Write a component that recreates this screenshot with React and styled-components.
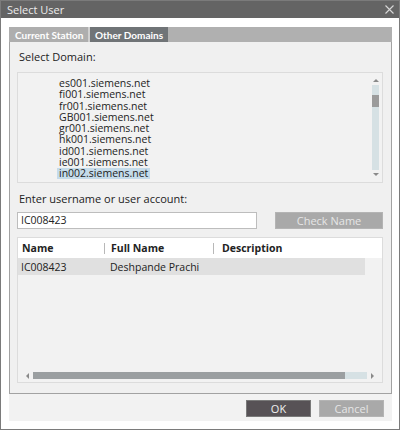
import React from "react";
import styled, { createGlobalStyle } from "styled-components";

const Global = createGlobalStyle`
  html, body { margin: 0; padding: 0; background: #ffffff; }
  body { font-family: "Open Sans", "Noto Sans", sans-serif; font-size: 11px; color: #222; }
  * { box-sizing: border-box; }
`;

const Window = styled.div`
  width: 400px;
  height: 430px;
  border: 1px solid #7b7b7b;
  background: #ffffff;
  display: flex;
  flex-direction: column;
`;

const TitleBar = styled.div`
  height: 17px;
  flex: none;
  background: #646464;
  color: #ececec;
  display: flex;
  align-items: center;
  justify-content: space-between;
  padding: 0 5px 1px 6px;
  font-size: 11px;
`;

const Body = styled.div`
  flex: 1;
  display: flex;
  flex-direction: column;
  padding: 9px 7px 8px 8px;
`;

const TabStrip = styled.div`
  height: 15px;
  flex: none;
  background: #b0b0b0;
  display: flex;
`;

const Tab = styled.div`
  height: 100%;
  width: ${(p) => p.$w}px;
  flex: none;
  display: flex;
  align-items: center;
  padding-left: ${(p) => p.$pl}px;
  font-family: Lato, "Open Sans", sans-serif;
  font-weight: 700;
  font-size: 10px;
  white-space: nowrap;
  color: #ffffff;
  background: ${(p) => (p.$active ? "#707477" : "#aeaeae")};
  border-right: ${(p) => (p.$sep ? "2px solid #d0d0d0" : "none")};
`;

const Panel = styled.div`
  height: 352px;
  flex: none;
  background: #f0f0f0;
  border: 1px solid #a2a2a2;
  border-top: none;
  display: flex;
  flex-direction: column;
  padding: 8px 8px 0 7px;
`;

const Label = styled.div`
  line-height: 14px;
  height: 14px;
  padding-left: 2px;
  margin-bottom: ${(p) => p.$mb}px;
  margin-top: ${(p) => p.$mt || 0}px;
`;

const ListBox = styled.div`
  height: 111px;
  border: 1px solid #dcdcdc;
  background: #f2f2f2;
  position: relative;
  padding: 2px 0 0 39px;
`;

const ItemRow = styled.div`
  height: 11.25px;
`;

const Item = styled.div`
  height: 11.25px;
  line-height: 11.25px;
  padding: 0 2px;
  display: inline-block;
  font-size: 10.5px;
  background: ${(p) => (p.$sel ? "#c4dbea" : "transparent")};
  color: #1d1d1d;
`;

const VScroll = styled.div`
  position: absolute;
  right: 3px;
  top: 3px;
  bottom: 3px;
  width: 7px;
  display: flex;
  flex-direction: column;
  align-items: center;
`;

const Arrow = styled.div`
  width: 0;
  height: 0;
  border-left: 3px solid transparent;
  border-right: 3px solid transparent;
  ${(p) => (p.$down ? "border-top: 3px solid #8a8a8a;" : "border-bottom: 3px solid #8a8a8a;")}
  margin: 3px 0;
  flex: none;
`;

const VTrack = styled.div`
  flex: 1;
  width: 7px;
  background: #d6e1e4;
  padding-top: 10px;
`;

const VThumb = styled.div`
  width: 7px;
  height: 12px;
  background: #9b9b9b;
`;

const InputRow = styled.div`
  height: 17px;
  display: flex;
  justify-content: space-between;
  margin-bottom: 8px;
`;

const TextInput = styled.div`
  width: 240px;
  height: 17px;
  background: #ffffff;
  border: 1px solid #bdbdbd;
  line-height: 15px;
  padding-left: 3px;
  font-size: 10.5px;
  color: #222;
`;

const Button = styled.div`
  width: ${(p) => p.$w}px;
  height: ${(p) => p.$h}px;
  background: ${(p) => (p.$dark ? "#575256" : "#a9a9a9")};
  border: 1px solid ${(p) => (p.$dark ? "#7a7a7a" : "#b4b4b4")};
  color: ${(p) => (p.$dark ? "#f0f0f0" : "#e6e6e6")};
  display: flex;
  align-items: center;
  justify-content: center;
  font-size: 11px;
`;

const Grid = styled.div`
  height: 146px;
  border: 1px solid #dcdcdc;
  background: #f2f2f2;
  position: relative;
  display: flex;
  flex-direction: column;
`;

const GridHeader = styled.div`
  height: 20px;
  background: #ffffff;
  display: flex;
  align-items: center;
  font-weight: 700;
  font-size: 10.5px;
  flex: none;
`;

const HeadCell = styled.div`
  width: ${(p) => p.$w}px;
  padding-left: ${(p) => p.$pl}px;
  border-right: ${(p) => (p.$sep ? "1px solid #b8b8b8" : "none")};
  height: 11px;
  line-height: 11px;
  display: flex;
  align-items: center;
`;

const GridRow = styled.div`
  height: 17px;
  width: 347px;
  background: #e0e0e0;
  display: flex;
  align-items: center;
  font-size: 10.5px;
`;

const Cell = styled.div`
  width: ${(p) => p.$w}px;
  padding-left: ${(p) => p.$pl}px;
`;

const HScroll = styled.div`
  position: absolute;
  left: 4px;
  right: 4px;
  bottom: 3px;
  height: 7px;
  display: flex;
  align-items: center;
`;

const HArrow = styled.div`
  width: 0;
  height: 0;
  border-top: 3px solid transparent;
  border-bottom: 3px solid transparent;
  ${(p) => (p.$right ? "border-left: 3px solid #8a8a8a;" : "border-right: 3px solid #8a8a8a;")}
  margin: 0 4px;
  flex: none;
`;

const HTrack = styled.div`
  flex: 1;
  height: 7px;
  background: #d6e1e4;
  display: flex;
`;

const HThumb = styled.div`
  width: 312px;
  height: 7px;
  background: #9b9fa1;
`;

const Footer = styled.div`
  height: 27px;
  flex: none;
  background: #f2f2f2;
  display: flex;
  justify-content: flex-end;
  align-items: center;
  gap: 8px;
  padding: 1px 8px 0 0;
`;

const CloseIcon = () => (
  <svg width="9" height="9" viewBox="0 0 9 9">
    <path d="M0.5 0.5 L8.5 8.5 M8.5 0.5 L0.5 8.5" stroke="#d8d8d8" strokeWidth="1.1" />
  </svg>
);

const domains = [
  "es001.siemens.net",
  "fi001.siemens.net",
  "fr001.siemens.net",
  "GB001.siemens.net",
  "gr001.siemens.net",
  "hk001.siemens.net",
  "id001.siemens.net",
  "ie001.siemens.net",
  "in002.siemens.net",
];

export default function App() {
  return (
    <>
      <Global />
      <Window>
        <TitleBar>
          <span>Select User</span>
          <CloseIcon />
        </TitleBar>
        <Body>
          <TabStrip>
            <Tab $w={81} $pl={6} $sep>Current Station</Tab>
            <Tab $w={78} $pl={5} $active>Other Domains</Tab>
          </TabStrip>
          <Panel>
            <Label $mb={8}>Select Domain:</Label>
            <ListBox>
              {domains.map((d, i) => (
                <ItemRow key={d}>
                  <Item $sel={i === domains.length - 1}>{d}</Item>
                </ItemRow>
              ))}
              <VScroll>
                <Arrow />
                <VTrack>
                  <VThumb />
                </VTrack>
                <Arrow $down />
              </VScroll>
            </ListBox>
            <Label $mt={9} $mb={6}>Enter username or user account:</Label>
            <InputRow>
              <TextInput>IC008423</TextInput>
              <Button $w={108} $h={17}>Check Name</Button>
            </InputRow>
            <Grid>
              <GridHeader>
                <HeadCell $w={87} $pl={4} $sep>Name</HeadCell>
                <HeadCell $w={109} $pl={6} $sep>Full Name</HeadCell>
                <HeadCell $w={120} $pl={8}>Description</HeadCell>
              </GridHeader>
              <GridRow>
                <Cell $w={92} $pl={3}>IC008423</Cell>
                <Cell $w={150} $pl={0}>Deshpande Prachi</Cell>
              </GridRow>
              <HScroll>
                <HArrow />
                <HTrack>
                  <HThumb />
                </HTrack>
                <HArrow $right />
              </HScroll>
            </Grid>
          </Panel>
          <Footer>
            <Button $dark $w={65} $h={17}>OK</Button>
            <Button $w={65} $h={17}>Cancel</Button>
          </Footer>
        </Body>
      </Window>
    </>
  );
}
